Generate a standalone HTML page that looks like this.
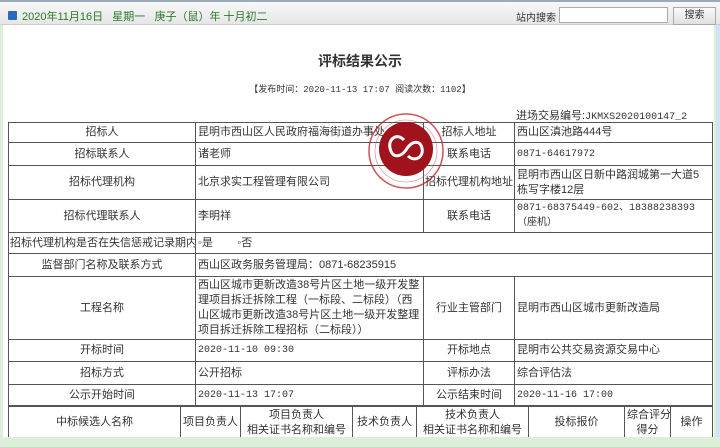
<!DOCTYPE html>
<html><head><meta charset="utf-8"><style>
*{margin:0;padding:0;box-sizing:border-box}
body{width:720px;height:447px;background:#dcefd8;font-family:"Liberation Sans","Noto Sans CJK SC",sans-serif;font-size:11px;color:#333;position:relative;overflow:hidden}
.top{position:absolute;left:0;top:0;width:720px;height:25px;background:linear-gradient(#f8f8f8,#e6e6e6);border-top:2px solid #9ab;border-bottom:1px solid #ccc}
.date{position:absolute;left:22px;top:6px;color:#2a7a2a;font-size:11px;white-space:nowrap}
.ic{position:absolute;left:8px;top:9px;width:9px;height:9px;background:#2a6ab8;border-radius:1px}
.srch{position:absolute;left:516px;top:7px;font-size:10px;color:#333}
.inp{position:absolute;left:559px;top:5px;width:109px;height:16px;background:#fff;border:1px solid #aaa}
.btn{position:absolute;left:673px;top:5px;width:43px;height:18px;background:linear-gradient(#fafafa,#e0e0e0);border:1px solid #aaa;font-size:10px;text-align:center;line-height:16px}
.main{position:absolute;left:3px;top:25px;width:711px;height:412px;background:#fff}
.rb{position:absolute;left:716px;top:25px;width:4px;height:412px;background:#cfe4f4}
h1{position:absolute;left:0;width:720px;top:51px;text-align:center;font-size:14px;font-weight:bold;color:#333}
.pub{position:absolute;left:0;width:720px;top:82px;text-align:center;font-size:9px;font-family:"Liberation Mono","Noto Sans CJK SC",monospace}
.no{position:absolute;left:516px;top:107px;font-size:11px;white-space:nowrap}
table{position:absolute;border-collapse:collapse;table-layout:fixed;left:8px;width:704px}
td{border:1px solid #555;padding:0 2px;line-height:15px;vertical-align:middle;overflow:hidden}
.c{text-align:center;white-space:nowrap}
.m{font-size:10px;font-family:"Liberation Mono","Noto Sans CJK SC",monospace}
.nw{white-space:nowrap}
</style></head><body>
<div class="top"><div class="ic"></div><div class="date">2020年11月16日&nbsp;&nbsp; 星期一&nbsp;&nbsp; 庚子（鼠）年 十月初二</div><div class="srch">站内搜索</div><div class="inp"></div><div class="btn">搜索</div></div>
<div class="main"></div><div class="rb"></div>
<h1>评标结果公示</h1>
<div class="pub">【发布时间：2020-11-13 17:07 阅读次数：1102】</div>
<div class="no">进场交易编号:<span class="m">JKMXS2020100147_2</span></div>
<table style="top:122px">
<colgroup><col style="width:187px"><col style="width:228px"><col style="width:91px"><col style="width:198px"></colgroup>
<tr style="height:20px"><td class="c">招标人</td><td class="nw">昆明市西山区人民政府福海街道办事处</td><td class="c">招标人地址</td><td>西山区滇池路444号</td></tr>
<tr style="height:23px"><td class="c">招标联系人</td><td>诸老师</td><td class="c">联系电话</td><td class="m">0871-64617972</td></tr>
<tr style="height:34px"><td class="c">招标代理机构</td><td>北京求实工程管理有限公司</td><td class="c" style="padding:0">招标代理机构地址</td><td>昆明市西山区日新中路润城第一大道5栋写字楼12层</td></tr>
<tr style="height:33px"><td class="c">招标代理联系人</td><td>李明祥</td><td class="c">联系电话</td><td class="m" style="font-size:10px">0871-68375449-602、18388238393（座机）</td></tr>
<tr style="height:21px"><td class="nw" style="padding:0 1px">招标代理机构是否在失信惩戒记录期内</td><td colspan="3">◦是 &nbsp;&nbsp;&nbsp;&nbsp;&nbsp;&nbsp;&nbsp;◦否</td></tr>
<tr style="height:23px"><td class="c">监督部门名称及联系方式</td><td colspan="3">西山区政务服务管理局：0871-68235915</td></tr>
<tr style="height:63px"><td class="c">工程名称</td><td>西山区城市更新改造38号片区土地一级开发整理项目拆迁拆除工程（一标段、二标段）（西山区城市更新改造38号片区土地一级开发整理项目拆迁拆除工程招标（二标段））</td><td class="c">行业主管部门</td><td>昆明市西山区城市更新改造局</td></tr>
<tr style="height:22px"><td class="c">开标时间</td><td class="m">2020-11-10 09:30</td><td class="c">开标地点</td><td>昆明市公共交易资源交易中心</td></tr>
<tr style="height:23px"><td class="c">招标方式</td><td>公开招标</td><td class="c">评标办法</td><td>综合评估法</td></tr>
<tr style="height:22px"><td class="c">公示开始时间</td><td class="m">2020-11-13 17:07</td><td class="c">公示结束时间</td><td class="m">2020-11-16 17:00</td></tr>
</table>
<table style="top:405px">
<colgroup><col style="width:172px"><col style="width:60px"><col style="width:112px"><col style="width:64px"><col style="width:112px"><col style="width:96px"><col style="width:46px"><col style="width:42px"></colgroup>
<tr style="height:34px"><td class="c">中标候选人名称</td><td class="c">项目负责人</td><td class="c">项目负责人<br>相关证书名称和编号</td><td class="c">技术负责人</td><td class="c">技术负责人<br>相关证书名称和编号</td><td class="c">投标报价</td><td class="c">综合评分<br>得分</td><td class="c">操作</td></tr>
</table>
<div style="position:absolute;left:0;top:437px;width:720px;height:10px;background:#dcefd8"></div>
<svg style="position:absolute;left:366px;top:112px" width="80" height="80" viewBox="0 0 80 80">
<circle cx="40" cy="39" r="37" fill="none" stroke="#c0282e" stroke-width="1.5" opacity=".8"/>
<circle cx="40" cy="39" r="31" fill="none" stroke="#c0282e" stroke-width=".6" opacity=".6"/>
<circle cx="40" cy="37" r="27" fill="#a0121c"/>
<path d="M38 28 C30 20 22 28 24 36 C26 46 34 46 40 38 C46 28 54 28 56 36 C58 46 48 50 42 44" fill="none" stroke="#fff" stroke-width="3"/>
</svg>
</body></html>
